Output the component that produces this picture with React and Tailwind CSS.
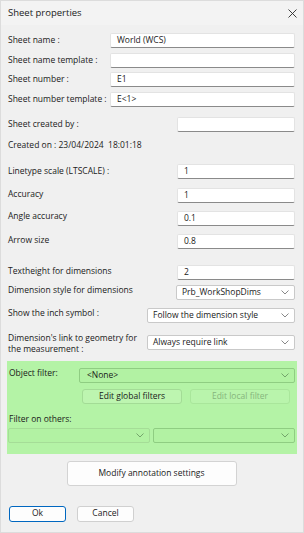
import React from "react";

const font = { fontFamily: '"Open Sans", "Noto Sans", "Liberation Sans", sans-serif' };

function Chevron({ color = "#6b6b6b" }) {
  return (
    <svg width="8" height="5" viewBox="0 0 8 5" className="shrink-0">
      <path d="M0.5 0.5 L4 4 L7.5 0.5" fill="none" stroke={color} strokeWidth="0.9" />
    </svg>
  );
}

function Input({ value = "", className = "" }) {
  return (
    <div
      className={
        "h-[15px] bg-white border border-[#e3e3e3] border-b-[#8a8a8a] rounded-[2px] flex items-center pl-[6px] text-[8.5px] text-[#1a1a1a] " +
        className
      }
    >
      {value}
    </div>
  );
}

function Select({ value = "", className = "", green = false }) {
  return (
    <div
      className={
        "h-[15px] rounded-[2px] flex items-center justify-between pl-[5px] pr-[5px] text-[8.5px] text-[#1a1a1a] " +
        (green
          ? "bg-[#b2f2a3] border border-[#8fcd82] "
          : "bg-white border border-[#c9c9c9] ") +
        className
      }
    >
      <span>{value}</span>
      <Chevron color={green ? "#6d9c64" : "#7a7a7a"} />
    </div>
  );
}

export default function App() {
  return (
    <div
      className="w-[304px] h-[533px] bg-[#f0f0f0] border border-[#dcdcdc] flex flex-col text-[#1a1a1a] text-[8.5px] overflow-hidden"
      style={font}
    >
      {/* Title bar */}
      <div className="h-[24px] flex items-center justify-between pl-[7px] pr-[6px] bg-[#f3f3f3]">
        <span className="text-[9.5px] text-[#1a1a1a]">Sheet properties</span>
        <svg width="9" height="9" viewBox="0 0 9 9">
          <path d="M0.5 0.5 L8.5 8.5 M8.5 0.5 L0.5 8.5" stroke="#2a2a2a" strokeWidth="0.9" />
        </svg>
      </div>

      <div className="flex flex-col pl-[7px] pr-[8px] pt-[8px]">
        {/* Name rows */}
        <div className="flex flex-col gap-[4.5px]">
          {[
            ["Sheet name :", "World (WCS)"],
            ["Sheet name template :", ""],
            ["Sheet number :", "E1"],
            ["Sheet number template :", "E<1>"],
          ].map(([l, v]) => (
            <div key={l} className="flex items-start">
              <span className="w-[102px] shrink-0 leading-[13px]">{l}</span>
              <Input value={v} className="flex-1" />
            </div>
          ))}
        </div>

        <div className="flex items-start mt-[10px]">
          <span className="flex-1 leading-[13px]">Sheet created by :</span>
          <Input className="w-[118px]" />
        </div>

        <div className="mt-[7px] h-[14px] flex items-center">Created on : 23/04/2024&nbsp;&nbsp;18:01:18</div>

        <div className="flex flex-col mt-[11px]">
          <div className="flex items-center">
            <span className="flex-1">Linetype scale (LTSCALE) :</span>
            <Input value="1" className="w-[118px]" />
          </div>
          <div className="flex items-center mt-[9px]">
            <span className="flex-1 -mt-[2px]">Accuracy</span>
            <Input value="1" className="w-[118px]" />
          </div>
          <div className="flex items-center mt-[8px]">
            <span className="flex-1 -mt-[4px]">Angle accuracy</span>
            <Input value="0.1" className="w-[118px]" />
          </div>
          <div className="flex items-center mt-[8px]">
            <span className="flex-1 -mt-[2px]">Arrow size</span>
            <Input value="0.8" className="w-[118px]" />
          </div>
          <div className="flex items-center mt-[16px]">
            <span className="flex-1 -mt-[2px]">Textheight for dimensions</span>
            <Input value="2" className="w-[118px]" />
          </div>
          <div className="flex items-center mt-[5px]">
            <span className="flex-1 -mt-[3px]">Dimension style for dimensions</span>
            <Select value="Prb_WorkShopDims" className="w-[119px] border-[#8f8f8f]" />
          </div>
          <div className="flex items-center mt-[8px]">
            <span className="flex-1 -mt-[4px]">Show the inch symbol :</span>
            <Select value="Follow the dimension style" className="w-[148px]" />
          </div>
          <div className="flex items-center mt-[9px]">
            <span className="flex-1 leading-[11px] pr-[4px]">
              Dimension's link to geometry for the measurement :
            </span>
            <Select value="Always require link" className="w-[148px]" />
          </div>
        </div>
      </div>

      {/* Green filter box */}
      <div className="mx-[6px] mt-[7px] h-[93px] bg-[#b4f3a6] flex flex-col px-[1px] pt-[7px]">
        <div className="flex items-center">
          <span className="w-[71px] pl-[1px] -mt-[3px]">Object filter:</span>
          <Select value="<None>" green className="flex-1 mr-[1px] pl-[7px]" />
        </div>
        <div className="flex gap-[8px] ml-[74px] mt-[6px]">
          <div className="w-[100px] h-[15px] rounded-[3px] bg-[#bdf5b0] border border-[#a3dc96] flex items-center justify-center">
            Edit global filters
          </div>
          <div className="w-[100px] h-[15px] rounded-[3px] bg-[#b9f4ac] border border-[#a9e69b] flex items-center justify-center text-[#86b57c]">
            Edit local filter
          </div>
        </div>
        <div className="mt-[9px] pl-[1px] leading-[11px]">Filter on others:</div>
        <div className="flex gap-[3px] mt-[4px] pr-[1px]">
          <Select green className="w-[142px] border-[#a5dd97]" />
          <Select green className="flex-1 border-[#8fcd82]" />
        </div>
      </div>

      <div className="flex justify-center mt-[7px] pr-[1px]">
        <div className="w-[170px] h-[25px] bg-[#fdfdfd] border border-[#d3d3d3] rounded-[3px] flex items-center justify-center">
          Modify annotation settings
        </div>
      </div>

      <div className="flex gap-[11px] ml-[8px] mt-[20px]">
        <div className="w-[57px] h-[16px] bg-[#fdfdfd] border border-[#0067c0] rounded-[3px] flex items-center justify-center">
          Ok
        </div>
        <div className="w-[57px] h-[16px] bg-[#fdfdfd] border border-[#d0d0d0] rounded-[3px] flex items-center justify-center">
          Cancel
        </div>
      </div>
    </div>
  );
}
